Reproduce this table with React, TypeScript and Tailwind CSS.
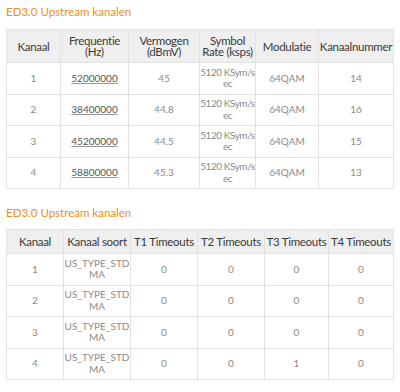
const font = { fontFamily: 'Lato, "Noto Sans", sans-serif' };

const upstream = [
    { kanaal: "1", freq: "52000000", power: "45", rate: "5120 KSym/sec", mod: "64QAM", nr: "14" },
    { kanaal: "2", freq: "38400000", power: "44.8", rate: "5120 KSym/sec", mod: "64QAM", nr: "16" },
    { kanaal: "3", freq: "45200000", power: "44.5", rate: "5120 KSym/sec", mod: "64QAM", nr: "15" },
    { kanaal: "4", freq: "58800000", power: "45.3", rate: "5120 KSym/sec", mod: "64QAM", nr: "13" },
];

const timeouts = [
    { kanaal: "1", soort: "US_TYPE_STDMA", t1: "0", t2: "0", t3: "0", t4: "0" },
    { kanaal: "2", soort: "US_TYPE_STDMA", t1: "0", t2: "0", t3: "0", t4: "0" },
    { kanaal: "3", soort: "US_TYPE_STDMA", t1: "0", t2: "0", t3: "0", t4: "0" },
    { kanaal: "4", soort: "US_TYPE_STDMA", t1: "0", t2: "0", t3: "1", t4: "0" },
];

const th = "border border-[#e2e2e2] bg-[#efefef] px-0 text-center align-middle text-[11.5px] font-normal leading-[11px] tracking-[-0.3px] text-[#3a3a3a]";
const td = "border border-[#e2e2e2] px-0 text-center align-middle text-[10px] leading-[11.5px] text-[#8a8a8a]";

const Title = ({ children }: { children: React.ReactNode }) => (
    <h2 className="text-[11.5px] leading-[14px] text-[#f28c28]">{children}</h2>
);

export default function App() {
    return (
        <div className="h-[392px] w-[400px] bg-white pl-[6px]" style={font}>
            <div className="pt-[5px]">
                <Title>ED3.0 Upstream kanalen</Title>
            </div>
            <table className="mt-[10px] w-[387px] table-fixed border-collapse">
                <colgroup>
                    <col className="w-[54px]" />
                    <col className="w-[68px]" />
                    <col className="w-[71px]" />
                    <col className="w-[56px]" />
                    <col className="w-[63px]" />
                    <col className="w-[75px]" />
                </colgroup>
                <thead>
                    <tr className="h-[33px]">
                        <th className={th}>Kanaal</th>
                        <th className={th}>Frequentie (Hz)</th>
                        <th className={th}>Vermogen (dBmV)</th>
                        <th className={th}>Symbol Rate (ksps)</th>
                        <th className={th}>Modulatie</th>
                        <th className={th}>Kanaalnummer</th>
                    </tr>
                </thead>
                <tbody>
                    {upstream.map((r) => (
                        <tr key={r.kanaal} className="h-[31.5px]">
                            <td className={td}>{r.kanaal}</td>
                            <td className={td}>
                                <a href="#" className="text-[#555] underline decoration-[#999]">{r.freq}</a>
                            </td>
                            <td className={td}>{r.power}</td>
                            <td className={td + " break-all tracking-[-0.45px]"}>{r.rate}</td>
                            <td className={td}>{r.mod}</td>
                            <td className={td}>{r.nr}</td>
                        </tr>
                    ))}
                </tbody>
            </table>

            <div className="pt-[17px]">
                <Title>ED3.0 Upstream kanalen</Title>
            </div>
            <table className="mt-[9px] w-[387px] table-fixed border-collapse">
                <colgroup>
                    <col className="w-[57px]" />
                    <col className="w-[67px]" />
                    <col className="w-[67px]" />
                    <col className="w-[67px]" />
                    <col className="w-[64px]" />
                    <col className="w-[65px]" />
                </colgroup>
                <thead>
                    <tr className="h-[24px]">
                        <th className={th}>Kanaal</th>
                        <th className={th}>Kanaal soort</th>
                        <th className={th}>T1 Timeouts</th>
                        <th className={th}>T2 Timeouts</th>
                        <th className={th}>T3 Timeouts</th>
                        <th className={th}>T4 Timeouts</th>
                    </tr>
                </thead>
                <tbody>
                    {timeouts.map((r) => (
                        <tr key={r.kanaal} className="h-[31.5px]">
                            <td className={td}>{r.kanaal}</td>
                            <td className={td + " break-all"}>{r.soort}</td>
                            <td className={td}>{r.t1}</td>
                            <td className={td}>{r.t2}</td>
                            <td className={td}>{r.t3}</td>
                            <td className={td}>{r.t4}</td>
                        </tr>
                    ))}
                </tbody>
            </table>
        </div>
    );
}
